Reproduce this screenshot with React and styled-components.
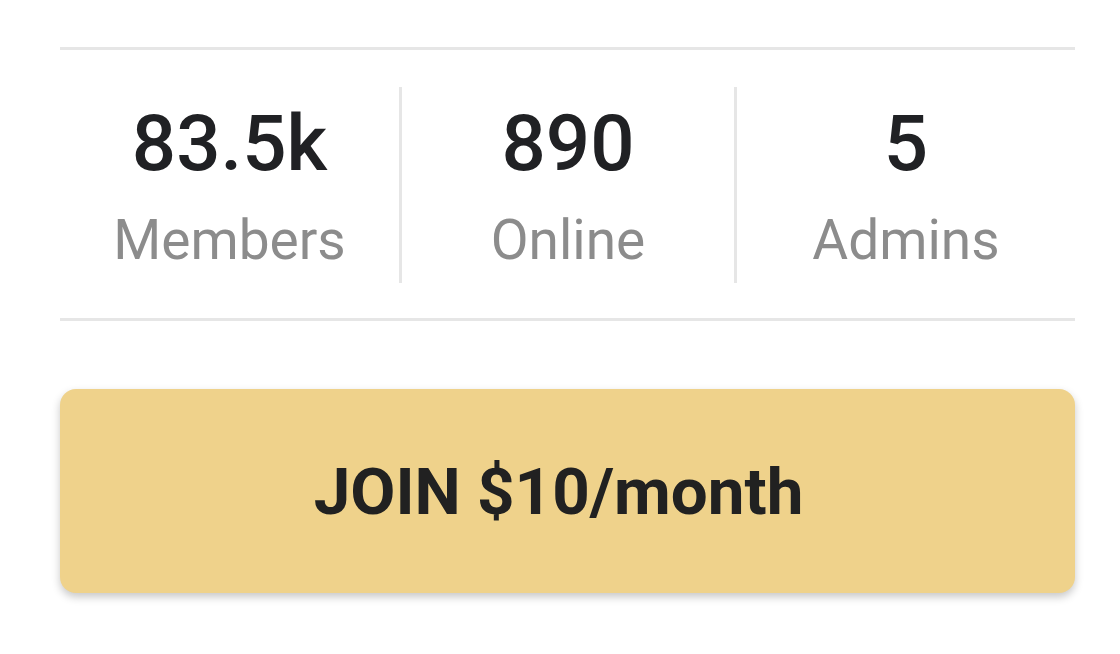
import React from "react";
import styled, { createGlobalStyle } from "styled-components";

const Global = createGlobalStyle`
  html, body { margin: 0; padding: 0; background: #ffffff; }
  body { font-family: Roboto, "Liberation Sans", Arial, sans-serif; }
`;

const Page = styled.div`
  width: 1120px;
  height: 654px;
  box-sizing: border-box;
  padding: 47px 45px 0 60px;
  background: #ffffff;
  overflow: hidden;
`;

const Divider = styled.div`
  height: 3px;
  background: #e6e6e6;
`;

const Stats = styled.div`
  display: grid;
  grid-template-columns: 339px 335px 1fr;
  padding: 37px 0 35px;
`;

const Stat = styled.div`
  display: flex;
  flex-direction: column;
  align-items: center;
  justify-content: center;
  height: 196px;
  border-left: ${(p) => (p.$first ? "none" : "3px solid #e6e6e6")};
`;

const Value = styled.div`
  font-size: 78px;
  line-height: 92px;
  font-weight: 500;
  color: #202124;
`;

const Label = styled.div`
  font-size: 55px;
  line-height: 66px;
  font-weight: 400;
  color: #8c8c8c;
  margin-top: 17px;
`;

const JoinButton = styled.button`
  display: flex;
  align-items: center;
  justify-content: center;
  width: 100%;
  height: 204px;
  margin-top: 68px;
  padding: 0 18px 0 0;
  border: none;
  border-radius: 16px;
  background: #efd28b;
  box-shadow: 0 4px 9px rgba(0, 0, 0, 0.22);
  font-family: Roboto, "Liberation Sans", Arial, sans-serif;
  font-size: 65.5px;
  font-weight: 700;
  color: #212121;
  cursor: pointer;
`;

const stats = [
  { value: "83.5k", label: "Members" },
  { value: "890", label: "Online" },
  { value: "5", label: "Admins" },
];

export default function App() {
  return (
    <>
      <Global />
      <Page>
        <Divider />
        <Stats>
          {stats.map((s, i) => (
            <Stat key={s.label} $first={i === 0}>
              <Value>{s.value}</Value>
              <Label>{s.label}</Label>
            </Stat>
          ))}
        </Stats>
        <Divider />
        <JoinButton>JOIN $10/month</JoinButton>
      </Page>
    </>
  );
}
